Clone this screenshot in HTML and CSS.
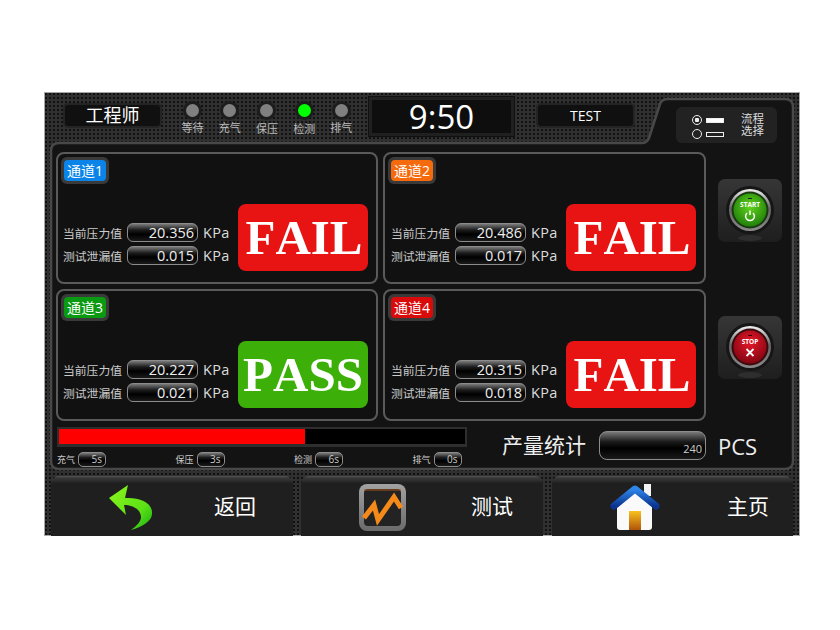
FILE: index.html
```html
<!DOCTYPE html>
<html lang="zh-CN">
<head>
    <meta charset="UTF-8">
    <title>泄漏测试</title>
    <link rel="stylesheet" href="styles.css">
</head>
<body>
    <div class="hmi">
        <svg class="panel-shape" width="756" height="444">
            <path d="M15 51 H598 Q603 51 605 46 L616 12 Q618 7 624 7 H741 Q749 7 749 15 V369 Q749 377 741 377 H15 Q7 377 7 369 V59 Q7 51 15 51 Z" fill="#131313" stroke="#484848" stroke-width="2.5"/>
        </svg>

        <header class="topbar">
            <div class="inset role">工程师</div>
            <div class="leds">
                <div class="led"><i></i><span>等待</span></div>
                <div class="led"><i></i><span>充气</span></div>
                <div class="led low"><i></i><span>保压</span></div>
                <div class="led low on"><i></i><span>检测</span></div>
                <div class="led"><i></i><span>排气</span></div>
            </div>
            <div class="clock"><div>9:50</div></div>
            <div class="inset program">TEST</div>
            <div class="selector">
                <div class="radios">
                    <div class="radio on"><i></i><b></b></div>
                    <div class="radio"><i></i><b></b></div>
                </div>
                <div class="selector-text">流程<br>选择</div>
            </div>
        </header>

        <section class="panel">
            <div class="panel-top">
                <div class="cards">
                    <div class="card">
                        <div class="badge blue"><span>通道1</span></div>
                        <div class="readings">
                            <div class="fields">
                                <label>当前压力值</label><div class="value">20.356</div><span class="unit">KPa</span>
                                <label>测试泄漏值</label><div class="value">0.015</div><span class="unit">KPa</span>
                            </div>
                            <div class="result fail">FAIL</div>
                        </div>
                    </div>
                    <div class="card">
                        <div class="badge orange"><span>通道2</span></div>
                        <div class="readings">
                            <div class="fields">
                                <label>当前压力值</label><div class="value">20.486</div><span class="unit">KPa</span>
                                <label>测试泄漏值</label><div class="value">0.017</div><span class="unit">KPa</span>
                            </div>
                            <div class="result fail">FAIL</div>
                        </div>
                    </div>
                    <div class="card">
                        <div class="badge green"><span>通道3</span></div>
                        <div class="readings">
                            <div class="fields">
                                <label>当前压力值</label><div class="value">20.227</div><span class="unit">KPa</span>
                                <label>测试泄漏值</label><div class="value">0.021</div><span class="unit">KPa</span>
                            </div>
                            <div class="result pass">PASS</div>
                        </div>
                    </div>
                    <div class="card">
                        <div class="badge red"><span>通道4</span></div>
                        <div class="readings">
                            <div class="fields">
                                <label>当前压力值</label><div class="value">20.315</div><span class="unit">KPa</span>
                                <label>测试泄漏值</label><div class="value">0.018</div><span class="unit">KPa</span>
                            </div>
                            <div class="result fail">FAIL</div>
                        </div>
                    </div>
                </div>

                <div class="side">
                    <div class="push">
                        <svg width="60" height="60" viewBox="0 0 60 60">
                            <defs>
                                <linearGradient id="ring" x1="0" y1="0" x2="0" y2="1">
                                    <stop offset="0" stop-color="#f2f2f2"/>
                                    <stop offset="0.45" stop-color="#666"/>
                                    <stop offset="1" stop-color="#8a8a8a"/>
                                </linearGradient>
                                <radialGradient id="go" cx="0.5" cy="0.4" r="0.65">
                                    <stop offset="0" stop-color="#62d41e"/>
                                    <stop offset="1" stop-color="#1c7a08"/>
                                </radialGradient>
                                <radialGradient id="halt" cx="0.5" cy="0.35" r="0.7">
                                    <stop offset="0" stop-color="#e8182a"/>
                                    <stop offset="1" stop-color="#7a0410"/>
                                </radialGradient>
                            </defs>
                            <ellipse cx="30" cy="57" rx="12" ry="3" fill="#2e2e2e"/>
                            <circle cx="30" cy="29" r="24" fill="#161616"/>
                            <circle cx="30" cy="29" r="21" fill="url(#ring)"/>
                            <circle cx="30" cy="29" r="18.5" fill="#1a3a12"/>
                            <circle cx="30" cy="29" r="16.5" fill="url(#go)"/>
                            <rect x="28" y="17" width="4" height="1" fill="#123"/>
                            <text x="30" y="26" class="push-text">START</text>
                            <path d="M27 32 A4.4 4.4 0 1 0 33 32" fill="none" stroke="#fff" stroke-width="1.5"/>
                            <path d="M30 29.5 V34" stroke="#fff" stroke-width="1.5"/>
                        </svg>
                    </div>
                    <div class="push">
                        <svg width="60" height="60" viewBox="0 0 60 60">
                            <ellipse cx="30" cy="57" rx="12" ry="3" fill="#2e2e2e"/>
                            <circle cx="30" cy="29" r="24" fill="#161616"/>
                            <circle cx="30" cy="29" r="21" fill="url(#ring)"/>
                            <circle cx="30" cy="29" r="18.5" fill="#3a0a0e"/>
                            <circle cx="30" cy="29" r="16.5" fill="url(#halt)"/>
                            <rect x="28" y="17" width="4" height="1" fill="#300"/>
                            <text x="30" y="26" class="push-text">STOP</text>
                            <path d="M26.5 31 L33.5 38 M33.5 31 L26.5 38" stroke="#fff" stroke-width="1.8"/>
                        </svg>
                    </div>
                </div>
            </div>

            <div class="panel-bottom">
                <div class="progress">
                    <div class="track"><div class="fill" style="width: 60.5%"></div></div>
                    <div class="steps">
                        <div class="step"><span>充气</span><div class="pill">5s</div></div>
                        <div class="step"><span>保压</span><div class="pill">3s</div></div>
                        <div class="step"><span>检测</span><div class="pill">6s</div></div>
                        <div class="step"><span>排气</span><div class="pill">0s</div></div>
                    </div>
                </div>
                <div class="output">
                    <span class="output-label">产量统计</span>
                    <div class="output-value">240</div>
                    <span class="output-unit">PCS</span>
                </div>
            </div>
        </section>

        <nav class="footer">
            <a class="nav-btn back">
                <svg width="48" height="50" viewBox="0 0 48 50">
                    <defs>
                        <linearGradient id="arrow" x1="0" y1="0" x2="1" y2="1">
                            <stop offset="0" stop-color="#8cf51c"/>
                            <stop offset="0.65" stop-color="#5ce016"/>
                            <stop offset="1" stop-color="#18b012"/>
                        </linearGradient>
                    </defs>
                    <path d="M2 15 L21 2 L18 15 C32 14 46 19 45 31 C45 38 35 44 24 47 C32 41 36 36 33 30 C31 25 24 22 17 22 L19 32 Z" fill="url(#arrow)"/>
                </svg>
                <span>返回</span>
            </a>
            <a class="nav-btn test">
                <svg width="47" height="47" viewBox="0 0 47 47">
                    <defs>
                        <linearGradient id="frame" x1="0" y1="0" x2="0" y2="1">
                            <stop offset="0" stop-color="#a2a2a2"/>
                            <stop offset="1" stop-color="#6a6a6a"/>
                        </linearGradient>
                    </defs>
                    <rect width="47" height="47" rx="8" fill="url(#frame)"/>
                    <rect x="5" y="5" width="37" height="37" rx="4" fill="#232323"/>
                    <path d="M5 6 H42" stroke="#a8561a" stroke-width="1"/>
                    <polyline points="5,34 15,21 19,36 35,13 42,24" fill="none" stroke="#f58a1a" stroke-width="5"/>
                </svg>
                <span>测试</span>
            </a>
            <a class="nav-btn home">
                <svg width="50" height="47" viewBox="0 0 50 47">
                    <defs>
                        <linearGradient id="roof" x1="0" y1="0" x2="0" y2="1">
                            <stop offset="0" stop-color="#2f86ea"/>
                            <stop offset="1" stop-color="#0a3490"/>
                        </linearGradient>
                        <linearGradient id="door" x1="0" y1="0" x2="0" y2="1">
                            <stop offset="0" stop-color="#f8c21e"/>
                            <stop offset="1" stop-color="#b0540a"/>
                        </linearGradient>
                    </defs>
                    <rect x="34" y="0" width="7" height="12" fill="#f4f4f4"/>
                    <path d="M7 20 L25 6 L42 20 V43 Q42 46 39 46 H10 Q7 46 7 43 Z" fill="#fafafa"/>
                    <rect x="19" y="27" width="12" height="19" fill="url(#door)"/>
                    <polyline points="4,22 25,5 46,22" fill="none" stroke="url(#roof)" stroke-width="7" stroke-linejoin="round" stroke-linecap="round"/>
                </svg>
                <span>主页</span>
            </a>
        </nav>
    </div>
</body>
</html>
```

FILE: styles.css
```css
* {
    box-sizing: border-box;
}

body {
    margin: 0;
    background-color: #fff;
    font-family: 'Open Sans', 'Noto Sans CJK SC', sans-serif;
    color: #fff;
}

.hmi {
    position: relative;
    width: 756px;
    height: 444px;
    margin: 92px 0 0 44px;
    background-color: #303030;
    background-image: radial-gradient(circle, #111 1px, transparent 1.4px);
    background-size: 4px 4px;
    box-shadow: inset 0 0 0 1px #a8a8a8;
}

.panel-shape {
    position: absolute;
    left: 0;
    top: 0;
}

/* top bar */
.topbar {
    position: relative;
    display: flex;
    height: 51px;
    padding: 13px 0 0 21px;
}

.inset {
    width: 95px;
    height: 21px;
    background-color: #101010;
    border-radius: 3px;
    box-shadow: 0 0 0 2px #242424;
    text-align: center;
}

.role {
    font-size: 18px;
    line-height: 21px;
}

.program {
    margin-left: 23px;
    font-size: 14px;
    line-height: 21px;
}

.leds {
    display: flex;
    width: 186px;
    margin: -5px 0 0 14px;
}

.led {
    display: flex;
    flex-direction: column;
    align-items: center;
    width: 37.2px;
}

.led i {
    display: block;
    width: 13px;
    height: 13px;
    margin: 4px 0 4px;
    border-radius: 50%;
    background-color: #808080;
    box-shadow: 0 0 0 3px #1d1d1d;
}

.led.on i {
    background-color: #0f0;
}

.led span {
    font-size: 11px;
    line-height: 14px;
    color: #bbb;
}

.led.low span {
    margin-top: 1px;
}

.clock {
    width: 147px;
    height: 41px;
    margin: -9px 0 0 8px;
    padding: 3px;
    background-color: #202020;
    border: 1px solid #111;
}

.clock div {
    height: 33px;
    background-color: #0e0e0e;
    font-size: 33px;
    line-height: 34px;
    text-align: center;
}

.selector {
    display: flex;
    align-items: center;
    width: 101px;
    height: 36px;
    margin: 2px 0 0 43px;
    padding-left: 16px;
    background-color: #222;
    border-radius: 6px;
}

.radios {
    display: flex;
    flex-direction: column;
    gap: 4px;
    padding-top: 4px;
}

.radio {
    display: flex;
    align-items: center;
    gap: 4px;
}

.radio i {
    width: 10px;
    height: 10px;
    border: 1px solid #eee;
    border-radius: 50%;
}

.radio.on i {
    background: radial-gradient(circle, #eee 2px, #222 2.5px);
}

.radio b {
    width: 18px;
    height: 5px;
    border: 1px solid #eee;
}

.radio.on b {
    background-color: #fff;
}

.selector-text {
    margin-left: 17px;
    font-size: 11.5px;
    line-height: 12px;
    color: #ddd;
}

/* main panel */
.panel {
    position: relative;
    height: 333px;
    padding: 9px 0 0 12px;
}

.panel-top {
    display: flex;
}

.cards {
    display: grid;
    grid-template-columns: 322px 323px;
    grid-template-rows: 132px 132px;
    gap: 5px;
}

.card {
    display: flex;
    flex-direction: column;
    justify-content: space-between;
    padding: 3px 8px 11px 3px;
    background-color: #111;
    border: 2px solid #5a5a5a;
    border-radius: 8px;
}

.badge {
    align-self: flex-start;
    width: 48px;
    height: 27px;
    padding: 3px;
    background-color: #3a3a3a;
    border-radius: 6px;
}

.badge span {
    display: block;
    height: 21px;
    border-radius: 4px;
    font-size: 14px;
    line-height: 21px;
    text-align: center;
}

.blue span {
    background-color: #0a84e8;
}

.orange span {
    background-color: #f56a0c;
}

.green span {
    background-color: #0a9a12;
}

.red span {
    background-color: #d80a0a;
}

.readings {
    display: flex;
    justify-content: flex-end;
    align-items: flex-end;
    gap: 10px;
}

.fields {
    display: grid;
    grid-template-columns: 59px 71px 25px;
    grid-template-rows: 19px 19px;
    align-items: center;
    column-gap: 5px;
    row-gap: 4px;
    margin-bottom: 6px;
}

.fields label {
    font-size: 11.8px;
    white-space: nowrap;
    color: #ccc;
}

.value,
.pill,
.output-value {
    background: linear-gradient(#7a7a7a, #1c1c1c 35%, #000 60%, #1a1a1a);
    border: 1px solid #8c8c8c;
    text-align: right;
}

.value {
    height: 19px;
    padding-right: 3px;
    border-radius: 6px;
    font-size: 14.5px;
    line-height: 17px;
    color: #eee;
}

.unit {
    font-size: 14.5px;
    letter-spacing: 0.3px;
    white-space: nowrap;
    color: #ddd;
}

.result {
    width: 130px;
    height: 67px;
    border-radius: 8px;
    font-family: 'Liberation Serif', serif;
    font-size: 49px;
    font-weight: bold;
    font-kerning: none;
    line-height: 67px;
    text-align: center;
}

.fail {
    background-color: #e81414;
    padding-left: 2px;
}

.pass {
    background-color: #3cb009;
}

.side {
    display: flex;
    flex-direction: column;
    gap: 74px;
    width: 64px;
    margin: 27px 0 0 12px;
}

.push {
    display: flex;
    justify-content: center;
    align-items: center;
    width: 64px;
    height: 63px;
    background: linear-gradient(#363636, #1e1e1e);
    border-radius: 7px;
}

.push-text {
    fill: #fff;
    font-size: 6.5px;
    font-weight: bold;
    text-anchor: middle;
}

/* progress and output */
.panel-bottom {
    display: flex;
    margin: 6px 0 0 1px;
}

.progress {
    width: 410px;
}

.track {
    height: 20px;
    background-color: #000;
    border: 2px solid #2e2e2e;
    border-bottom-width: 3px;
}

.fill {
    height: 100%;
    background-color: #f00;
}

.steps {
    display: flex;
    margin-top: 5px;
}

.step {
    display: flex;
    flex-shrink: 0;
    align-items: center;
    gap: 3px;
    width: 118.5px;
    font-size: 9px;
    color: #ccc;
}

.step:last-child {
    width: auto;
}

.pill {
    width: 28px;
    height: 15px;
    padding-right: 3px;
    border-radius: 5px;
    font-size: 10px;
    line-height: 13px;
}

.output {
    display: flex;
    align-items: center;
    gap: 12px;
    height: 29px;
    margin: 4px 0 0 35px;
}

.output-label {
    margin: 0 1px 4px 0;
    font-size: 21px;
    white-space: nowrap;
    color: #eee;
}

.output-value {
    width: 107px;
    height: 29px;
    padding-right: 3px;
    border-radius: 8px;
    font-size: 11px;
    line-height: 33px;
    color: #ccc;
}

.output-unit {
    font-size: 22px;
    color: #eee;
}

/* footer buttons */
.footer {
    position: relative;
    display: flex;
    gap: 8px;
    height: 60px;
    margin-left: 7px;
}

.nav-btn {
    display: flex;
    justify-content: space-between;
    align-items: center;
    width: 242px;
    padding: 3px 0 0 58px;
    background: linear-gradient(#555, #363636 2px, #2c2c2c 5px, #1f1f1f 7px);
    border-radius: 8px 8px 0 0;
    font-size: 21px;
}

.nav-btn span {
    margin-bottom: 6px;
}

.back {
    padding-left: 56px;
    padding-right: 37px;
}

.test {
    padding-right: 30px;
}

.home {
    width: 241px;
    margin-left: 1px;
    padding-right: 24px;
}
```
